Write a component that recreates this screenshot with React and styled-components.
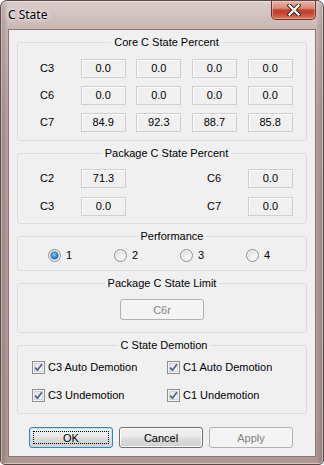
import React from "react";
import styled, { createGlobalStyle, css } from "styled-components";

const GlobalStyle = createGlobalStyle`
  html, body { margin: 0; padding: 0; }
  body {
    width: 324px; height: 465px; overflow: hidden; background: #fff;
    font-family: "Liberation Sans", Arial, sans-serif; font-size: 11px; color: #000;
  }
  * { box-sizing: border-box; }
`;

const Window = styled.div`
  width: 324px; height: 465px;
  display: flex; flex-direction: column;
  border: 1px solid #5a4846;
  border-radius: 7px 7px 5px 5px;
  background:
    linear-gradient(90deg, rgba(90,60,58,0.3) 0px, rgba(90,60,58,0) 7px, rgba(90,60,58,0) 315px, rgba(90,60,58,0.3) 322px),
    linear-gradient(180deg, #dacccb 0px, #c9b7b4 28px, #b8a19e 120px, #b09895 465px);
  box-shadow: inset 0 0 0 1px rgba(255,255,255,0.45);
  padding: 0 7px 7px;
`;

const TitleBar = styled.div`
  height: 28px; flex: none;
  display: flex; justify-content: space-between; align-items: flex-start;
`;

const Title = styled.div`
  margin-top: 6px;
  font-family: "Noto Sans", "Open Sans", sans-serif; font-size: 12px; line-height: 16px;
  color: #000;
  text-shadow: 0 0 6px rgba(255,255,255,0.9), 0 0 3px rgba(255,255,255,0.9);
`;

const CloseButton = styled.div`
  width: 45px; height: 19px;
  display: flex; align-items: center; justify-content: center;
  border: 1px solid #6b2f27; border-top: none;
  border-radius: 0 0 5px 5px;
  background: linear-gradient(180deg, #eab0a3 0%, #dc8b78 40%, #c4432d 50%, #c4432d 65%, #d8765c 100%);
  box-shadow: inset 0 0 0 1px rgba(255,255,255,0.35);
`;

const Client = styled.div`
  flex: 1;
  display: flex; flex-direction: column; gap: 6px;
  background: #f0f0f0;
  border: 1px solid #8c7672;
  padding: 6px 8px 8px;
`;

const Group = styled.fieldset`
  margin: 0; min-inline-size: 0;
  border: 1px solid #d5dfe5; border-radius: 3px;
  padding: ${(p) => p.$pad};
`;

const Legend = styled.legend`
  margin: 0 auto; padding: 0 3px;
  line-height: 13px; font-size: 11px;
`;

const CoreGrid = styled.div`
  display: grid;
  grid-template-columns: 30px repeat(4, 45px);
  grid-auto-rows: 19px;
  column-gap: 10.67px; row-gap: 8px;
  align-items: center;
`;

const PkgGrid = styled.div`
  display: grid;
  grid-template-columns: 41px 45px 1fr 41px 45px;
  grid-auto-rows: 19px;
  row-gap: 9px;
  align-items: center;
`;

const RowLabel = styled.div`
  line-height: 13px;
`;

const Value = styled.div`
  height: 19px;
  border: 1px solid #cfcfcf;
  box-shadow: inset 1px 1px 0 #fbfbfb;
  background: #f0f0f0;
  display: flex; align-items: center; justify-content: center;
  line-height: 13px;
`;

const RadioRow = styled.div`
  display: grid; grid-template-columns: repeat(4, 66px);
  height: 13px;
`;

const OptionItem = styled.label`
  display: flex; align-items: center; gap: ${(p) => p.$gap || 5}px;
  height: 13px; line-height: 13px;
`;

const RadioDot = styled.span`
  position: relative;
  width: 13px; height: 13px; flex: none;
  border-radius: 50%;
  border: 1px solid #8e8f8f;
  background: radial-gradient(circle at 60% 65%, #fbfbfb 0%, #e6e6e6 55%, #cfcfcf 100%);
  box-shadow: inset 0 0 0 1px #f6f6f6;
  ${(p) =>
    p.$checked &&
    css`
      &::after {
        content: ""; position: absolute; left: 2px; top: 2px; width: 7px; height: 7px;
        border-radius: 50%;
        background: radial-gradient(circle at 45% 40%, #9fdcff 0%, #3d9ae0 35%, #1b5fa5 75%, #173f7a 100%);
        box-shadow: 0 0 0 0.5px #2a5a8e;
      }
    `}
`;

const Check = styled.span`
  width: 13px; height: 13px; flex: none;
  border: 1px solid #8f8f8f;
  background: linear-gradient(135deg, #dcdcdc 0%, #f4f4f4 60%, #ffffff 100%);
  box-shadow: inset 0 0 0 1px #f4f4f4, inset 0 0 0 2px #d2d2d2;
  display: flex; align-items: center; justify-content: center;
`;

const CheckGrid = styled.div`
  display: grid; grid-template-columns: 135px 135px;
  grid-auto-rows: 13px; row-gap: 15px;
`;

const Center = styled.div`
  display: flex; justify-content: center;
`;

const Btn = styled.button`
  position: relative;
  width: 84px; height: 21px; padding: 0; margin: 0;
  font-family: "Liberation Sans", Arial, sans-serif; font-size: 11px; color: #000;
  border: 1px solid #707070; border-radius: 3px;
  background: linear-gradient(180deg, #f2f2f2 0%, #ebebeb 48%, #dddddd 52%, #cfcfcf 100%);
  box-shadow: inset 0 0 0 1px #fcfcfc;
  ${(p) =>
    p.$default &&
    css`
      border-color: #3c7fb1;
      box-shadow: inset 0 0 0 1px #bfe4f8;
      &::after {
        content: ""; position: absolute; left: 3px; right: 3px; top: 3px; bottom: 3px;
        border: 1px dotted #000;
      }
    `}
  &:disabled {
    color: #838383;
    border-color: #adb2b5;
    background: #f4f4f4;
    box-shadow: none;
  }
`;

const ButtonRow = styled.div`
  display: flex; gap: 6px;
  margin-top: 7px; padding-left: 12px;
`;

const CheckMark = () => (
  <svg width="9" height="9" viewBox="0 0 9 9">
    <path d="M1.2 4.6 L3.4 7.2 L7.9 1.2" fill="none" stroke="#4a5f8f" strokeWidth="1.7" strokeLinejoin="round" />
  </svg>
);

const CloseX = () => (
  <svg width="14" height="12" viewBox="0 0 14 12">
    <path d="M2.5 1.5 L11.5 10.5 M11.5 1.5 L2.5 10.5" stroke="#3b2624" strokeWidth="4.2" strokeLinecap="square" />
    <path d="M2.5 1.5 L11.5 10.5 M11.5 1.5 L2.5 10.5" stroke="#ffffff" strokeWidth="2.2" strokeLinecap="square" />
  </svg>
);

const core = [
  ["C3", ["0.0", "0.0", "0.0", "0.0"]],
  ["C6", ["0.0", "0.0", "0.0", "0.0"]],
  ["C7", ["84.9", "92.3", "88.7", "85.8"]],
];

export default function App() {
  return (
    <>
      <GlobalStyle />
      <Window>
        <TitleBar>
          <Title>C State</Title>
          <CloseButton>
            <CloseX />
          </CloseButton>
        </TitleBar>
        <Client>
          <Group $pad="10px 13px 8px 22px">
            <Legend>Core C State Percent</Legend>
            <CoreGrid>
              {core.map(([label, vals]) => (
                <React.Fragment key={label}>
                  <RowLabel>{label}</RowLabel>
                  {vals.map((v, i) => (
                    <Value key={i}>{v}</Value>
                  ))}
                </React.Fragment>
              ))}
            </CoreGrid>
          </Group>

          <Group $pad="9px 13px 7px 22px">
            <Legend>Package C State Percent</Legend>
            <PkgGrid>
              <RowLabel>C2</RowLabel>
              <Value>71.3</Value>
              <span />
              <RowLabel>C6</RowLabel>
              <Value>0.0</Value>
              <RowLabel>C3</RowLabel>
              <Value>0.0</Value>
              <span />
              <RowLabel>C7</RowLabel>
              <Value>0.0</Value>
            </PkgGrid>
          </Group>

          <Group $pad="6px 10px 8px 30px">
            <Legend>Performance</Legend>
            <RadioRow>
              {["1", "2", "3", "4"].map((n) => (
                <OptionItem key={n}>
                  <RadioDot $checked={n === "1"} />
                  {n}
                </OptionItem>
              ))}
            </RadioRow>
          </Group>

          <Group $pad="9px 10px 12px">
            <Legend>Package C State Limit</Legend>
            <Center>
              <Btn disabled>C6r</Btn>
            </Center>
          </Group>

          <Group $pad="9px 10px 11px 14px">
            <Legend>C State Demotion</Legend>
            <CheckGrid>
              {["C3 Auto Demotion", "C1 Auto Demotion", "C3 Undemotion", "C1 Undemotion"].map((t) => (
                <OptionItem key={t} $gap={3}>
                  <Check>
                    <CheckMark />
                  </Check>
                  {t}
                </OptionItem>
              ))}
            </CheckGrid>
          </Group>

          <ButtonRow>
            <Btn $default>OK</Btn>
            <Btn>Cancel</Btn>
            <Btn disabled>Apply</Btn>
          </ButtonRow>
        </Client>
      </Window>
    </>
  );
}
